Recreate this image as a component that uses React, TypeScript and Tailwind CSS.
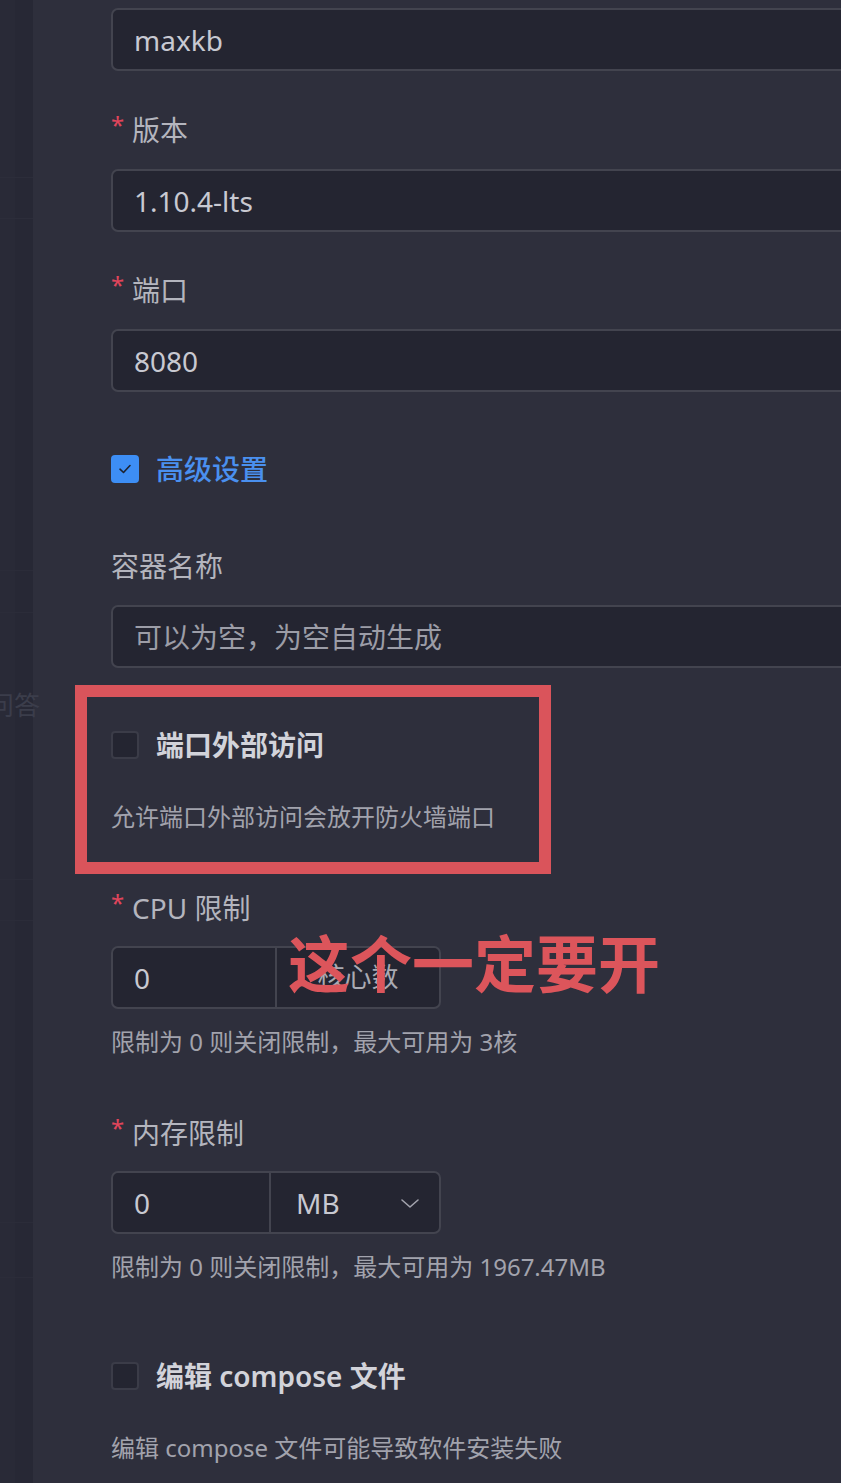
import React from "react";

const FONT = { fontFamily: '"Noto Sans", "Noto Sans CJK SC", sans-serif' };

function Label({ text, required = true }: { text: string; required?: boolean }) {
  return (
    <div className="flex h-[40px] items-center text-[28px] text-[#b4b5be]">
      {required && (
        <span className="mr-[10px] w-[11px] -translate-y-[5px] text-[24px] leading-none text-[#e0455b]">*</span>
      )}
      <span>{text}</span>
    </div>
  );
}

function TextInput({ value, placeholder }: { value?: string; placeholder?: string }) {
  return (
    <div className="flex h-[63px] w-[780px] items-center rounded-[7px] border-2 border-[#43444f] bg-[#242531] pl-[21px] text-[28px]">
      {value ? (
        <span className="text-[#c8c9d1]">{value}</span>
      ) : (
        <span className="text-[28px] text-[#9c9da7]">{placeholder}</span>
      )}
    </div>
  );
}

function Checkbox({ checked }: { checked?: boolean }) {
  if (checked) {
    return (
      <div className="flex h-[28px] w-[28px] items-center justify-center rounded-[4px] bg-[#3d8ef5]">
        <svg width="16" height="16" viewBox="0 0 16 16" fill="none">
          <path d="M3 8.2 L6.5 11.5 L13 4.5" stroke="#1d2330" strokeWidth="1.6" strokeLinecap="round" strokeLinejoin="round" />
        </svg>
      </div>
    );
  }
  return <div className="h-[28px] w-[28px] rounded-[4px] border-2 border-[#3b3c48] bg-[#242531]" />;
}

function Help({ text }: { text: string }) {
  return <div className="h-[36px] text-[24px] leading-[36px] text-[#a2a3ad]">{text}</div>;
}

export default function App() {
  return (
    <div className="relative h-[1483px] w-[841px] overflow-hidden bg-[#2e2f3c]" style={FONT}>
      <div className="flex h-full">
        {/* sidebar remnant */}
        <div className="relative h-full w-[33px] shrink-0 bg-[#292a37]">
          <div className="absolute right-0 top-0 h-full w-[18px] bg-[#272835]" />
          <div className="absolute left-0 top-[177px] h-px w-[33px] bg-[#2c2d3a]" />
          <div className="absolute left-0 top-[218px] h-px w-[33px] bg-[#2c2d3a]" />
          <div className="absolute left-0 top-[570px] h-px w-[33px] bg-[#2b2c39]" />
          <div className="absolute left-0 top-[612px] h-px w-[33px] bg-[#2b2c39]" />
          <div className="absolute left-0 top-[879px] h-px w-[33px] bg-[#2b2c39]" />
          <div className="absolute left-0 top-[920px] h-px w-[33px] bg-[#2b2c39]" />
          <div className="absolute left-0 top-[1222px] h-px w-[33px] bg-[#2b2c39]" />
          <div className="absolute left-0 top-[1277px] h-px w-[33px] bg-[#2b2c39]" />
          <div className="absolute -left-[12px] top-[692px] whitespace-nowrap text-[26px] leading-none text-[#3b3d4b]">
            问答
          </div>
        </div>

        {/* main form */}
        <div className="flex flex-1 flex-col pl-[78px] pt-[8px]">
          <TextInput value="maxkb" />

          <div className="mt-[39px]">
            <Label text="版本" />
          </div>
          <div className="mt-[19px]">
            <TextInput value="1.10.4-lts" />
          </div>

          <div className="mt-[38px]">
            <Label text="端口" />
          </div>
          <div className="mt-[19px]">
            <TextInput value="8080" />
          </div>

          <div className="mt-[57px] flex h-[40px] items-center gap-[17px]">
            <Checkbox checked />
            <span className="text-[28px] font-medium text-[#4a90ef]">高级设置</span>
          </div>

          <div className="mt-[57px]">
            <Label text="容器名称" required={false} />
          </div>
          <div className="mt-[19px]">
            <TextInput placeholder="可以为空，为空自动生成" />
          </div>

          <div className="mt-[57px] flex h-[40px] items-center gap-[17px]">
            <Checkbox />
            <span className="text-[28px] font-semibold text-[#d2d3da]">端口外部访问</span>
          </div>
          <div className="mt-[34px]">
            <Help text="允许端口外部访问会放开防火墙端口" />
          </div>

          <div className="mt-[53px]">
            <Label text="CPU 限制" />
          </div>
          <div className="mt-[18px] flex h-[63px] w-[330px] rounded-[7px] border-2 border-[#43444f] bg-[#242531]">
            <div className="flex w-[164px] items-center border-r-2 border-[#43444f] pl-[21px] text-[28px] text-[#c8c9d1]">
              0
            </div>
            <div className="flex flex-1 items-center justify-center text-[27px] text-[#a9aab3]">核心数</div>
          </div>
          <div className="mt-[15px]">
            <Help text="限制为 0 则关闭限制，最大可用为 3核" />
          </div>

          <div className="mt-[53px]">
            <Label text="内存限制" />
          </div>
          <div className="mt-[18px] flex h-[63px] w-[330px] rounded-[7px] border-2 border-[#43444f] bg-[#242531]">
            <div className="flex w-[158px] items-center border-r-2 border-[#43444f] pl-[21px] text-[28px] text-[#c8c9d1]">
              0
            </div>
            <div className="flex flex-1 items-center justify-between pl-[25px] pr-[18px]">
              <span className="text-[28px] text-[#c8c9d1]">MB</span>
              <svg width="22" height="14" viewBox="0 0 22 14" fill="none">
                <path d="M3 4 L11 11 L19 4" stroke="#a3a4ae" strokeWidth="1.6" strokeLinecap="round" strokeLinejoin="round" />
              </svg>
            </div>
          </div>
          <div className="mt-[15px]">
            <Help text="限制为 0 则关闭限制，最大可用为 1967.47MB" />
          </div>

          <div className="mt-[71px] flex h-[40px] items-center gap-[17px]">
            <Checkbox />
            <span className="text-[28px] font-semibold text-[#d2d3da]">编辑 compose 文件</span>
          </div>
          <div className="mt-[34px]">
            <Help text="编辑 compose 文件可能导致软件安装失败" />
          </div>
        </div>
      </div>

      {/* annotations */}
      <div className="absolute left-[75px] top-[685px] h-[189px] w-[476px] border-[12px] border-[#da545b]" />
      <div className="absolute left-[288px] top-[933px] whitespace-nowrap text-[62px] font-bold leading-none text-[#dc555b]">
        这个一定要开
      </div>
    </div>
  );
}
